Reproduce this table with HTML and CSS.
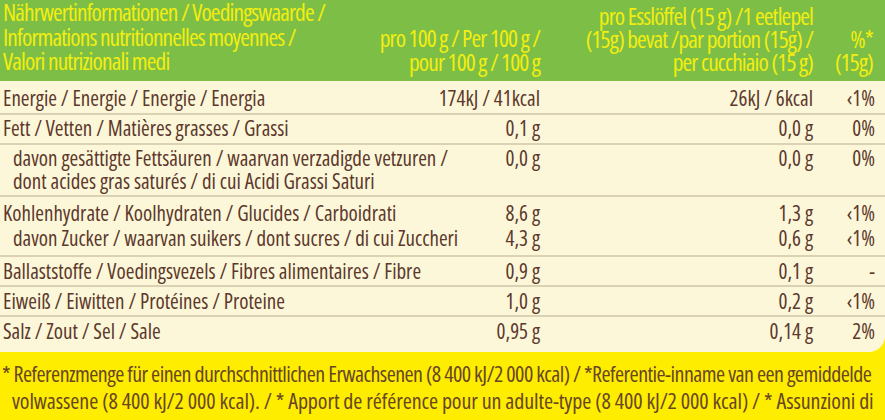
FILE: index.html
```html
<!DOCTYPE html>
<html lang="de">
<head>
<meta charset="utf-8">
<link rel="stylesheet" href="styles.css">
</head>
<body>
<div class="page">
  <div class="table">
    <div class="head">
      <div class="h-label">Nährwertinformationen / Voedingswaarde /<br>Informations nutritionnelles moyennes /<br>Valori nutrizionali medi</div>
      <div class="h-col2">pro 100 g / Per 100 g /<br>pour 100 g / 100 g</div>
      <div class="h-col3">pro Esslöffel (15 g) /1 eetlepel<br>(15g) bevat /par portion (15g) /<br>per cucchiaio (15 g)</div>
      <div class="h-col4">%*<br>(15g)</div>
    </div>

    <div class="group g-energy">
      <div class="line"><div class="lab">Energie / Energie / Energie / Energia</div><div class="v">174kJ / 41kcal</div><div class="v">26kJ / 6kcal</div><div class="v">‹1%</div></div>
    </div>
    <div class="group g-fat">
      <div class="line"><div class="lab">Fett / Vetten / Matières grasses / Grassi</div><div class="v">0,1 g</div><div class="v">0,0 g</div><div class="v">0%</div></div>
    </div>
    <div class="group g-sat">
      <div class="line tight"><div class="lab sub">davon gesättigte Fettsäuren / waarvan verzadigde vetzuren /<br>dont acides gras saturés / di cui Acidi Grassi Saturi</div><div class="v">0,0 g</div><div class="v">0,0 g</div><div class="v">0%</div></div>
    </div>
    <div class="group g-carb">
      <div class="line"><div class="lab">Kohlenhydrate / Koolhydraten / Glucides / Carboidrati</div><div class="v">8,6 g</div><div class="v">1,3 g</div><div class="v">‹1%</div></div>
      <div class="line second"><div class="lab sub">davon Zucker / waarvan suikers / dont sucres / di cui Zuccheri</div><div class="v">4,3 g</div><div class="v">0,6 g</div><div class="v">‹1%</div></div>
    </div>
    <div class="group">
      <div class="line"><div class="lab">Ballaststoffe / Voedingsvezels / Fibres alimentaires / Fibre</div><div class="v">0,9 g</div><div class="v">0,1 g</div><div class="v">-</div></div>
    </div>
    <div class="group">
      <div class="line"><div class="lab">Eiweiß / Eiwitten / Protéines / Proteine</div><div class="v">1,0 g</div><div class="v">0,2 g</div><div class="v">‹1%</div></div>
    </div>
    <div class="group g-salt">
      <div class="line"><div class="lab">Salz / Zout / Sel / Sale</div><div class="v">0,95 g</div><div class="v">0,14 g</div><div class="v">2%</div></div>
    </div>
  </div>

  <div class="foot">
    <div class="f-first">* Referenzmenge für einen durchschnittlichen Erwachsenen (8 400 kJ/2 000 kcal) / *Referentie-inname van een gemiddelde</div>
    <div class="f-rest">volwassene (8 400 kJ/2 000 kcal). / * Apport de référence pour un adulte-type (8 400 kJ/2 000 kcal) / * Assunzioni di</div>
    <div class="f-rest">riferimento di un adulto medio (8 400 kJ/2 000 kcal)</div>
  </div>
</div>
</body>
</html>
```
FILE: styles.css
```css
html, body {
  margin: 0;
  padding: 0;
}
body {
  width: 885px;
  height: 420px;
  overflow: hidden;
  background: #ffed00;
  font-family: "Open Sans", "Liberation Sans", sans-serif;
  font-stretch: 82%;
  font-weight: 400;
}
.page {
  width: 885px;
  height: 420px;
  overflow: hidden;
  background: #ffed00;
}
.table {
  background: #fdf7da;
  border-bottom-right-radius: 16px;
  color: #5c392c;
  font-size: 21px;
}
.head {
  height: 81px;
  box-sizing: border-box;
  background: #7dbe46;
  color: #f2ee10;
  font-size: 23.5px;
  font-stretch: 75%;
  letter-spacing: -0.9px;
  display: grid;
  grid-template-columns: minmax(0, 1fr) 200px 273px 62px;
  align-items: end;
  padding: 0 10px 11px 3px;
  overflow: hidden;
  white-space: nowrap;
}
.h-label {
  line-height: 24.5px;
  text-align: left;
}
.h-col2 {
  line-height: 24px;
  text-align: right;
}
.h-col3 {
  line-height: 23px;
  text-align: right;
}
.h-col4 {
  line-height: 23px;
  text-align: right;
  padding-right: 2px;
}
.group {
  padding: 2px 10px 2px 3px;
  border-bottom: 2px solid #dbd2b3;
}
.line {
  display: grid;
  grid-template-columns: minmax(0, 1fr) 120px 273px 62px;
  line-height: 24px;
  white-space: nowrap;
}
.line.tight {
  line-height: 23px;
}
.line.second {
  margin-top: 1px;
}
.lab {
  text-align: left;
}
.lab.sub {
  padding-left: 10px;
}
.v {
  text-align: right;
}
.g-energy {
  padding-top: 5px;
  padding-bottom: 3px;
}
.g-fat {
  padding-top: 1px;
  padding-bottom: 3px;
}
.g-carb {
  padding-top: 4px;
  padding-bottom: 5px;
}
.g-salt {
  padding-bottom: 9px;
  border-bottom: 0;
}
.foot {
  color: #684622;
  font-size: 22px;
  font-stretch: 75%;
  line-height: 27px;
  padding: 8px 0 0 2px;
  white-space: nowrap;
}
.f-first {
  letter-spacing: -0.55px;
}
.f-rest {
  padding-left: 10px;
  letter-spacing: -0.1px;
}
```
